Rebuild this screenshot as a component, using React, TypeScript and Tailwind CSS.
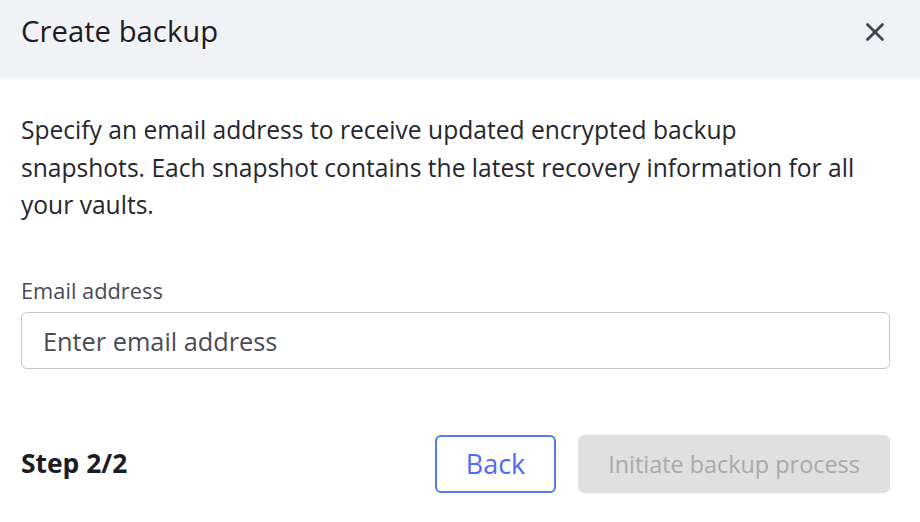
import { X } from "lucide-react";

export default function App() {
  return (
    <div className="flex h-[522px] w-[920px] flex-col bg-white font-['Open_Sans',sans-serif] text-[#1c1c24]">
      <header className="flex h-[78px] items-center justify-between bg-[#f1f2f6] pl-[21px] pr-[30px]">
        <h1 className="pb-[14px] text-[29.3px] leading-none">Create backup</h1>
        <button className="pb-[14px] text-[#44444f]">
          <X size={30} strokeWidth={2.2} />
        </button>
      </header>
      <main className="flex flex-1 flex-col px-[21px]">
        <p className="mt-[33px] whitespace-nowrap text-[24.6px] leading-[37.5px] text-[#26262e]">
          Specify an email address to receive updated encrypted backup
          <br />
          snapshots. Each snapshot contains the latest recovery information for all
          <br />
          your vaults.
        </p>
        <label className="mt-[56px] text-[21.8px] leading-none text-[#4a4a56]">Email address</label>
        <input
          className="mt-[11px] h-[57px] w-[869px] rounded-[6px] border border-[#c5c6cd] px-[21px] text-[25.3px] outline-none placeholder:text-[#4a4a55]"
          placeholder="Enter email address"
        />
        <div className="mt-[66px] flex items-center">
          <span className="text-[26.4px] font-bold">Step 2/2</span>
          <div className="ml-auto flex gap-[22px] pr-[9px]">
            <button className="h-[58px] w-[121px] rounded-[6px] border-2 border-[#5a76f2] text-[27px] text-[#4d6cf3]">
              Back
            </button>
            <button className="h-[58px] w-[312px] rounded-[6px] bg-[#e0e0e0] text-[23.4px] text-[#a9a9a9]">
              Initiate backup process
            </button>
          </div>
        </div>
      </main>
    </div>
  );
}
